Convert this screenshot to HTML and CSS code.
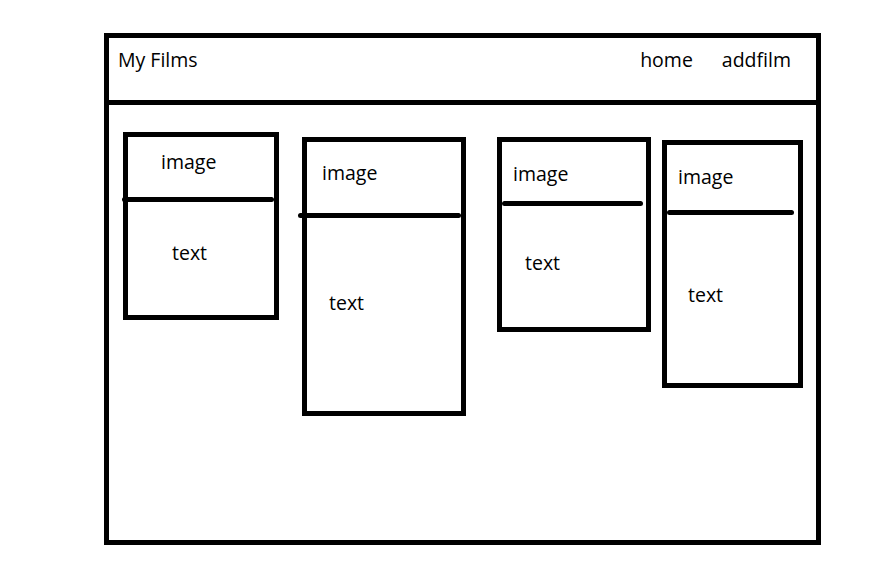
FILE: index.html
```html
<!DOCTYPE html>
<html lang="en">
<head>
<meta charset="utf-8">
<title>My Films wireframe</title>
<link rel="stylesheet" href="styles.css">
</head>
<body>
<div class="frame">
  <header class="header">
    <div class="brand">My Films</div>
    <nav class="nav">
      <span class="nav-link">home</span>
      <span class="nav-link">addfilm</span>
    </nav>
  </header>
  <main class="content">
    <div class="card card-1">
      <div class="card-image">image</div>
      <div class="divider"></div>
      <div class="card-text">text</div>
    </div>
    <div class="card card-2">
      <div class="card-image">image</div>
      <div class="divider"></div>
      <div class="card-text">text</div>
    </div>
    <div class="card card-3">
      <div class="card-image">image</div>
      <div class="divider"></div>
      <div class="card-text">text</div>
    </div>
    <div class="card card-4">
      <div class="card-image">image</div>
      <div class="divider"></div>
      <div class="card-text">text</div>
    </div>
  </main>
</div>
</body>
</html>
```

FILE: styles.css
```css
* { box-sizing: border-box; }

html, body {
  margin: 0;
  padding: 0;
  background: #ffffff;
}

body {
  font-family: "Open Sans", "Noto Sans", sans-serif;
  font-size: 19.5px;
  line-height: 26px;
  color: #000000;
}

.frame {
  margin: 33px 0 0 104px;
  width: 717px;
  height: 512px;
  border: 5px solid #000;
  display: flex;
  flex-direction: column;
}

.header {
  height: 67px;
  flex: 0 0 auto;
  border-bottom: 5px solid #000;
  display: flex;
  justify-content: space-between;
  align-items: flex-start;
  padding: 9px 25px 0 9px;
}

.nav {
  display: flex;
  gap: 29px;
}

.content {
  flex: 1 1 auto;
  display: flex;
  align-items: flex-start;
  padding-left: 14px;
}

.card {
  border: 5px solid #000;
  display: flex;
  flex-direction: column;
  flex: 0 0 auto;
}

.divider {
  height: 5px;
  background: #000;
  border-radius: 3px;
  flex: 0 0 auto;
}

.card-image,
.card-text {
  flex: 0 0 auto;
}

/* card 1 */
.card-1 { width: 156px; height: 188px; margin-top: 27px; }
.card-1 .card-image { height: 60px; padding: 12px 0 0 33px; }
.card-1 .divider { margin-left: -6px; width: 152px; }
.card-1 .card-text { padding: 38px 0 0 44px; }

/* card 2 */
.card-2 { width: 164px; height: 279px; margin-top: 32px; margin-left: 23px; }
.card-2 .card-image { height: 71px; padding: 18px 0 0 15px; }
.card-2 .divider { margin-left: -9px; width: 163px; }
.card-2 .card-text { padding: 72px 0 0 22px; }

/* card 3 */
.card-3 { width: 154px; height: 195px; margin-top: 32px; margin-left: 31px; }
.card-3 .card-image { height: 59px; padding: 19px 0 0 11px; }
.card-3 .divider { width: 141px; }
.card-3 .card-text { padding: 44px 0 0 23px; }

/* card 4 */
.card-4 { width: 141px; height: 248px; margin-top: 35px; margin-left: 11px; }
.card-4 .card-image { height: 65px; padding: 19px 0 0 11px; }
.card-4 .divider { width: 127px; }
.card-4 .card-text { padding: 67px 0 0 21px; }
```
